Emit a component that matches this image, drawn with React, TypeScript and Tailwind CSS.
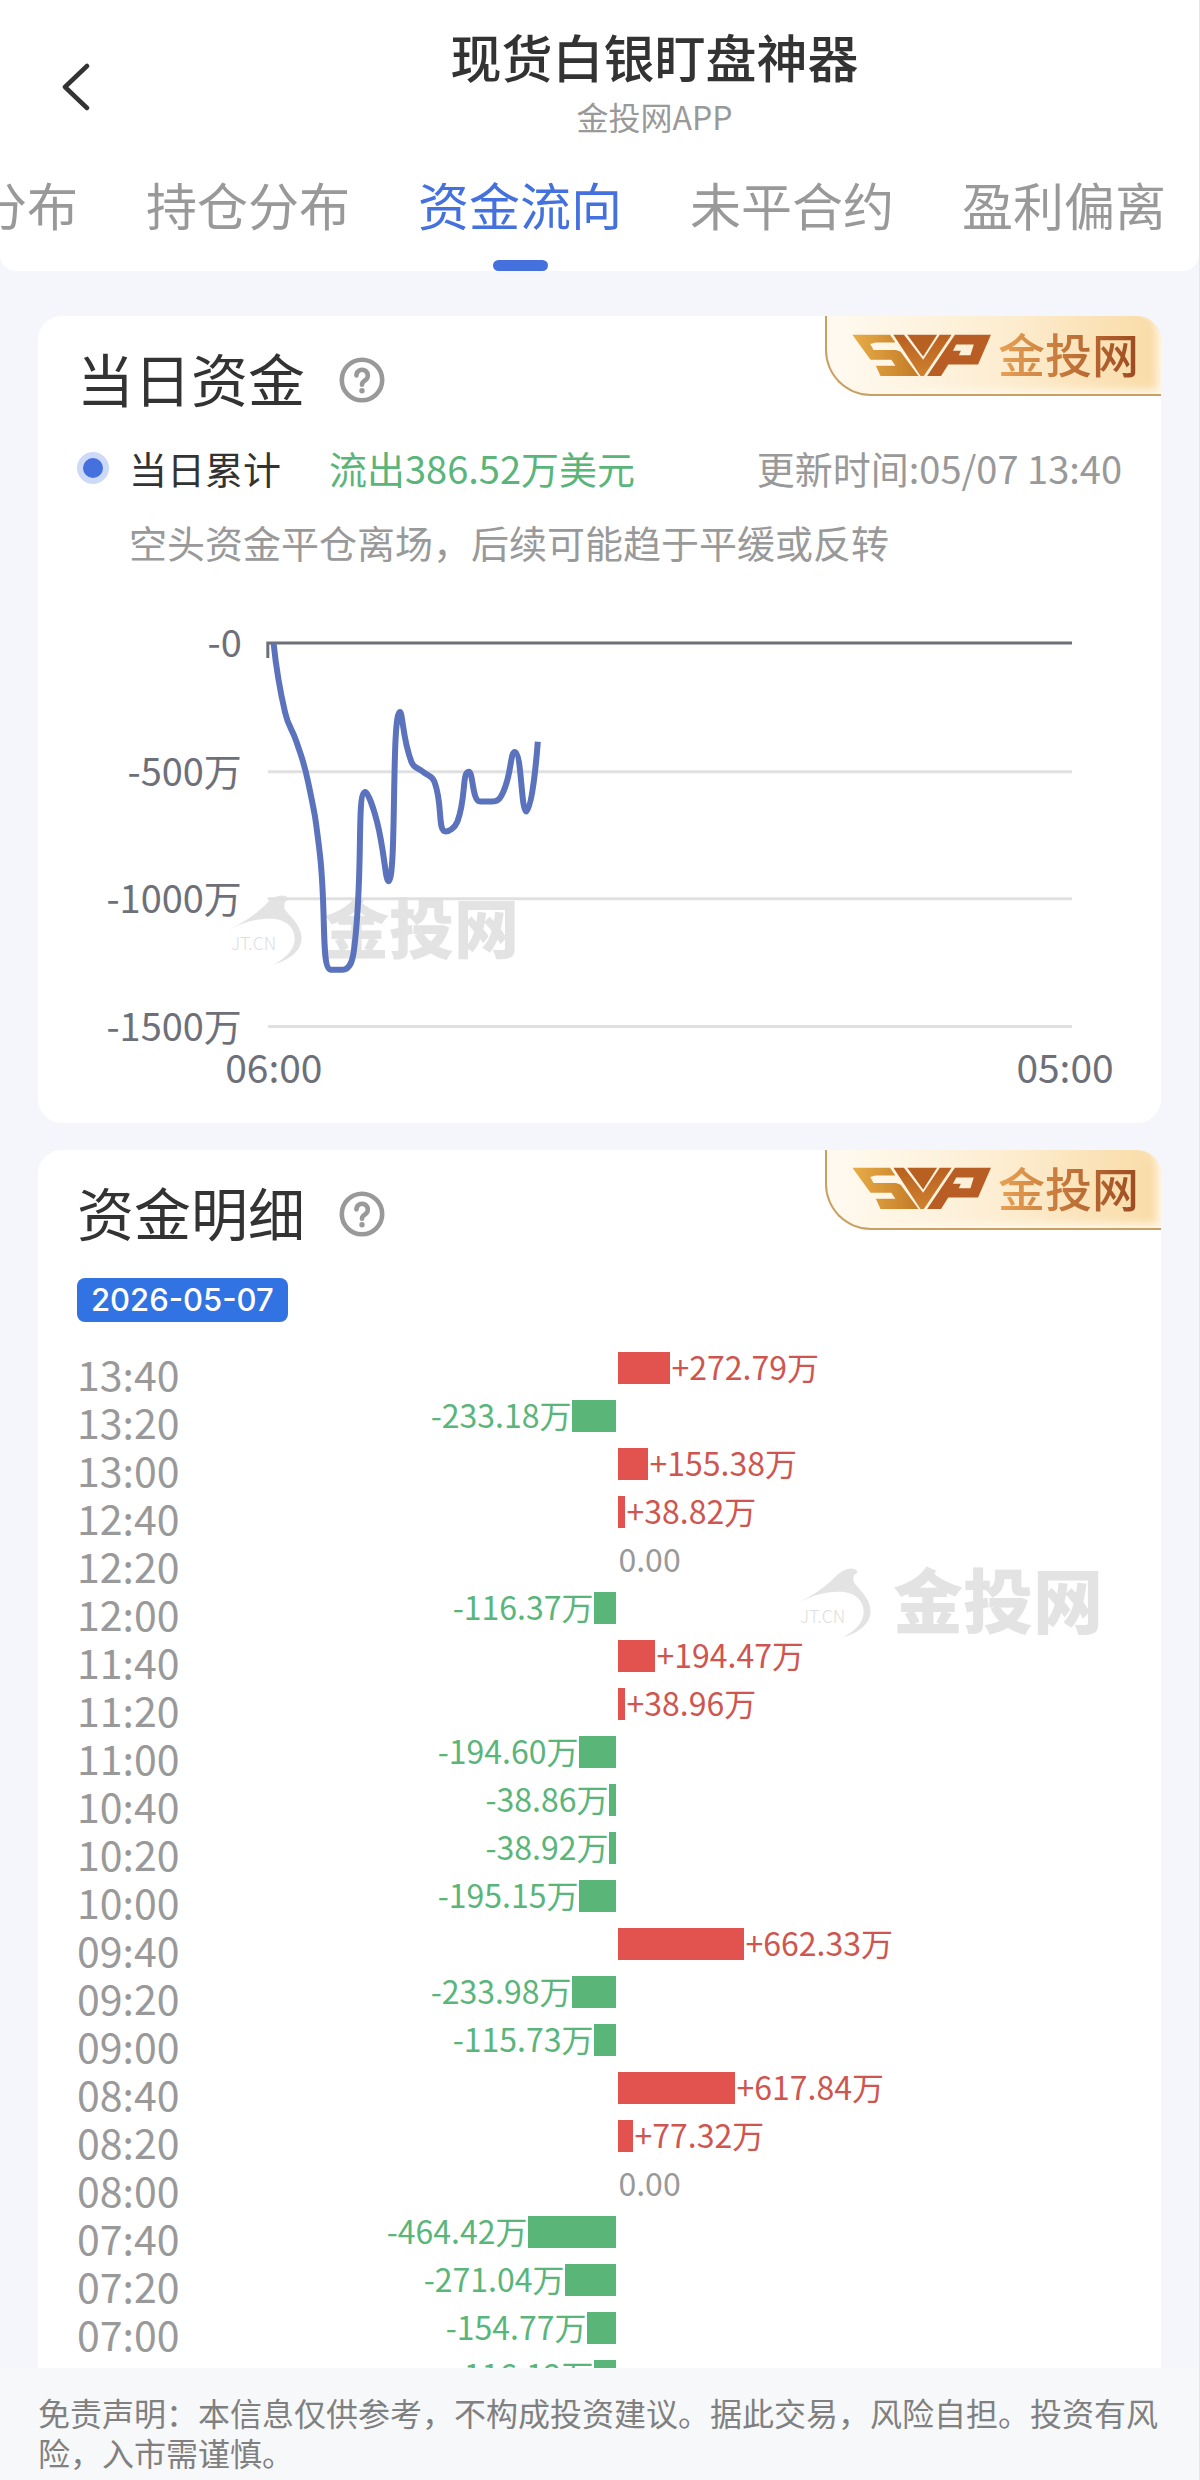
import React from 'react';

interface FlowRecord {
  time: string;
  value: number;
}

// Newest first, values in 万 USD
const records: FlowRecord[] = [
  { time: '13:40', value: 272.79 },
  { time: '13:20', value: -233.18 },
  { time: '13:00', value: 155.38 },
  { time: '12:40', value: 38.82 },
  { time: '12:20', value: 0 },
  { time: '12:00', value: -116.37 },
  { time: '11:40', value: 194.47 },
  { time: '11:20', value: 38.96 },
  { time: '11:00', value: -194.6 },
  { time: '10:40', value: -38.86 },
  { time: '10:20', value: -38.92 },
  { time: '10:00', value: -195.15 },
  { time: '09:40', value: 662.33 },
  { time: '09:20', value: -233.98 },
  { time: '09:00', value: -115.73 },
  { time: '08:40', value: 617.84 },
  { time: '08:20', value: 77.32 },
  { time: '08:00', value: 0 },
  { time: '07:40', value: -464.42 },
  { time: '07:20', value: -271.04 },
  { time: '07:00', value: -154.77 },
  { time: '06:40', value: -116.12 },
  { time: '06:20', value: -271.29 },
  { time: '06:00', value: 0 },
];

const PAGE_SIZE = 22;

const tabs = ['成本分布', '持仓分布', '资金流向', '未平合约', '盈利偏离'];
const activeTab = '资金流向';

const gridLines = [
  { label: '-0', y: 43 },
  { label: '-500万', y: 172 },
  { label: '-1000万', y: 299 },
  { label: '-1500万', y: 427 },
];

const AXIS_LEFT = 191;
const AXIS_RIGHT = 996;
const SLOTS = 70; // 06:00 - 05:00, one slot every 20 minutes

const getPoints = () => {
  let total = 0;
  const step = (AXIS_RIGHT - AXIS_LEFT) / SLOTS;
  return [...records].reverse().map((r, i) => {
    total += r.value;
    return { x: AXIS_LEFT + step * (i + 0.5), y: 43 - (total * 384) / 1500 };
  });
};

const clamp = (v: number, a: number, b: number) =>
  Math.max(Math.min(v, Math.max(a, b)), Math.min(a, b));

// Smooth bezier through all points, control points never overshoot their segment
const smoothPath = (pts: { x: number; y: number }[], smooth = 0.5) => {
  let d = `M${pts[0].x} ${pts[0].y}`;
  let c0 = pts[0];
  for (let i = 1; i < pts.length; i++) {
    const prev = pts[i - 1];
    const cur = pts[i];
    const next = pts[i + 1];
    let c1 = cur;
    let nextC0 = cur;
    if (next) {
      const lenPrev = Math.hypot(cur.x - prev.x, cur.y - prev.y);
      const lenNext = Math.hypot(next.x - cur.x, next.y - cur.y);
      const ratio = lenNext / (lenNext + lenPrev);
      nextC0 = {
        x: clamp(cur.x + (next.x - prev.x) * smooth * ratio, next.x, cur.x),
        y: clamp(cur.y + (next.y - prev.y) * smooth * ratio, next.y, cur.y),
      };
      c1 = {
        x: clamp(cur.x - ((nextC0.x - cur.x) * lenPrev) / lenNext, prev.x, cur.x),
        y: clamp(cur.y - ((nextC0.y - cur.y) * lenPrev) / lenNext, prev.y, cur.y),
      };
      nextC0 = {
        x: cur.x + ((cur.x - c1.x) * lenNext) / lenPrev,
        y: cur.y + ((cur.y - c1.y) * lenNext) / lenPrev,
      };
    }
    d += `C${c0.x} ${c0.y} ${c1.x} ${c1.y} ${cur.x} ${cur.y}`;
    c0 = nextC0;
  }
  return d;
};

const HelpIcon: React.FC = () => (
  <svg viewBox="0 0 46 46" className="size-[46px]" fill="none" stroke="#999" strokeLinecap="round" aria-hidden="true">
    <circle cx="23" cy="23" r="20.2" strokeWidth="4.6" />
    <path d="M17.4 18.4a5.7 5.7 0 1 1 8.8 4.9c-2.1 1.4-3.2 2.2-3.2 4.4" strokeWidth="4.6" />
    <circle cx="23" cy="33.8" r="2.7" fill="#999" stroke="none" />
  </svg>
);

const BrandBadge: React.FC = () => (
  <div className="absolute right-0 top-0 flex h-20 w-[336px] items-center gap-1.5 rounded-bl-[46px] rounded-tr-[24px] border-b-2 border-l-2 border-[#c9a063] bg-linear-to-r from-[#fffaf1] via-[#fdeed3] to-[#f9dba6] pl-6 shadow-[inset_-6px_-6px_8px_-2px_#fff8ea]">
    <svg viewBox="20 26 422 130" className="h-[43px] w-[141px] shrink-0" role="img" aria-label="SVP">
      <defs>
        <linearGradient id="svp-s" gradientUnits="userSpaceOnUse" x1="22" x2="222" y1="90" y2="90">
          <stop offset="0" stopColor="#e8ad48" />
          <stop offset="1" stopColor="#c27a26" />
        </linearGradient>
        <linearGradient id="svp-v" gradientUnits="userSpaceOnUse" x1="0" x2="0" y1="28" y2="152">
          <stop offset="0" stopColor="#b9601f" />
          <stop offset="1" stopColor="#cf812f" />
        </linearGradient>
      </defs>
      <path fill="url(#svp-s)" d="M22 28H136L152 52H92L76 56L86 74H154L168 80L222 153H107L93 122H152L140 104H77Z" />
      <path fill="url(#svp-v)" d="M146 28H178L236 104L286 28H322L238 153H228Z" />
      <path fill="#b85f22" d="M188 28H278L236 94Z" />
      <path fill="#b85e24" fillRule="evenodd" d="M332 28H441L402 118H312L290 153H248ZM336 58H389L379 90H344L350 77H326Z" />
    </svg>
    <span className="bg-linear-to-r from-[#e8a254] to-[#9c4a20] bg-clip-text pb-1 text-[47px] leading-[56px] font-medium text-transparent">
      金投网
    </span>
  </div>
);

const Watermark: React.FC<{ className: string }> = ({ className }) => (
  <div
    className={`pointer-events-none absolute flex items-end gap-5 leading-[72px] font-black text-[#e3e3e3] ${className}`}
    aria-hidden="true"
  >
    <svg viewBox="24 20 236 222" className="h-[70px] w-[78px]">
      <path
        fill="currentColor"
        d="M25 131C75 108 118 78 150 44C168 27 192 17 208 24C216 27 219 33 214 36C204 40 202 50 204 62C208 78 258 110 258 158C257 198 220 226 170 240C212 218 238 190 236 156C234 118 204 95 158 95C108 95 72 108 25 131Z"
      />
      <text x="34" y="194" fontSize="56" fontWeight="300" fill="#dedede">
        JT.CN
      </text>
    </svg>
    <span className="pb-1">金投网</span>
  </div>
);

const CardTitle: React.FC<{ title: string }> = ({ title }) => (
  <div className="flex h-14 items-center gap-[34px]">
    <h2 className="pb-1.5 text-[57px] leading-[56px] text-[#333]">{title}</h2>
    <button type="button" aria-label={`${title}说明`}>
      <HelpIcon />
    </button>
  </div>
);

const FlowChart: React.FC = () => (
  <svg viewBox="0 0 1046 500" className="relative w-full" role="img" aria-label="当日资金累计走势">
    {gridLines.map((line, i) => (
      <g key={line.label}>
        {i > 0 && <line x1={AXIS_LEFT} x2={AXIS_RIGHT} y1={line.y} y2={line.y} stroke="#e0e0e0" strokeWidth="3" />}
        <text x="165" y={line.y + 14} textAnchor="end" fontSize="38" fill="#6e7079">
          {line.label}
        </text>
      </g>
    ))}
    <path d={`M${AXIS_LEFT} 58V43H${AXIS_RIGHT}`} fill="none" stroke="#6e7079" strokeWidth="3" />
    <path d={smoothPath(getPoints())} fill="none" stroke="#5b72bd" strokeWidth="6" strokeLinejoin="bevel" />
    <text x="197" y="483" textAnchor="middle" fontSize="39" fill="#6e7079">
      06:00
    </text>
    <text x="989" y="483" textAnchor="middle" fontSize="39" fill="#6e7079">
      05:00
    </text>
  </svg>
);

const barWidth = (value: number) => ({ width: Math.round(Math.abs(value) * 0.19) });

const FlowRow: React.FC<{ record: FlowRecord }> = ({ record: { time, value } }) => (
  <li className="grid h-12 grid-cols-[540fr_506fr] items-center text-[32px] leading-[44px]">
    <div className="flex items-center">
      <time className="mr-auto pt-2.5 text-[41px] leading-[38px] text-[#999]">{time}</time>
      {value < 0 && (
        <>
          <span className="mr-px pb-1 text-[#5ab57a]">{value.toFixed(2)}万</span>
          <span className="h-8 bg-[#5ab578]" style={barWidth(value)} />
        </>
      )}
    </div>
    <div className="flex items-center pl-0.5">
      {value > 0 && (
        <>
          <span className="h-8 bg-[#e2524e]" style={barWidth(value)} />
          <span className="ml-px pb-1 text-[#cf5650]">+{value.toFixed(2)}万</span>
        </>
      )}
      {value === 0 && <span className="pb-1 text-[#999]">0.00</span>}
    </div>
  </li>
);

export default function App() {
  return (
    <div className="flex h-screen flex-col overflow-hidden border-r border-[#e4e6ee] bg-[#f5f6fb] font-['Noto_Sans_CJK_SC',sans-serif]">
      <header className="shrink-0 overflow-hidden rounded-b-2xl bg-white">
        <div className="grid grid-cols-[110px_1fr] items-center pt-7">
          <button type="button" aria-label="返回" className="flex justify-end pr-5 pt-2.5">
            <svg viewBox="0 0 28 50" className="h-[50px] w-7" fill="none" stroke="#333" strokeWidth="4.5" strokeLinecap="round" strokeLinejoin="round">
              <path d="M25 4L3 25L25 46" />
            </svg>
          </button>
          <div className="text-center">
            <h1 className="text-[51px] leading-[56px] font-medium text-[#333]">现货白银盯盘神器</h1>
            <p className="mt-3 text-[32px] leading-10 text-[#999]">金投网APP</p>
          </div>
        </div>
        <nav className="-ml-[126px] mt-10 flex gap-[68px] text-[51px] leading-[56px]">
          {tabs.map((tab) => (
            <a
              key={tab}
              href="#"
              aria-current={tab === activeTab ? 'page' : undefined}
              className={`flex shrink-0 flex-col items-center gap-7 whitespace-nowrap ${tab === activeTab ? 'text-[#4471dd]' : 'text-[#999]'}`}
            >
              {tab}
              {tab === activeTab && <span className="h-[11px] w-[55px] rounded-full bg-[#4471dd]" />}
            </a>
          ))}
        </nav>
      </header>

      <main className="flex flex-1 flex-col gap-[27px] overflow-y-auto px-[38px] pt-[45px] [scrollbar-width:none]">
        <section className="relative shrink-0 rounded-3xl bg-white px-[39px] pb-[23px] pt-9">
          <BrandBadge />
          <CardTitle title="当日资金" />
          <div className="mt-8 flex h-14 items-center whitespace-nowrap text-[38px] leading-[56px]">
            <span className="size-8 rounded-full border-[6px] border-[#cddaf7] bg-[#4471dd]" />
            <span className="ml-5 text-[#333]">当日累计</span>
            <strong className="ml-12 font-normal text-[#5ab57a]">流出386.52万美元</strong>
            <span className="ml-auto text-[#999]">更新时间:05/07 13:40</span>
          </div>
          <p className="mb-[30px] mt-[18px] pl-[52px] text-[38px] leading-[56px] text-[#999]">
            空头资金平仓离场，后续可能趋于平缓或反转
          </p>
          <Watermark className="bottom-[158px] left-[188px] text-[65px]" />
          <FlowChart />
        </section>

        <section className="relative shrink-0 rounded-3xl bg-white px-[39px] pb-9 pt-9">
          <BrandBadge />
          <CardTitle title="资金明细" />
          <time className="mt-9 block w-fit rounded-lg bg-[#3173e3] px-3.5 font-['Inter',sans-serif] text-[31px] leading-[44px] font-medium text-white">
            2026-05-07
          </time>
          <ol className="mt-[22px]">
            {records.slice(0, PAGE_SIZE).map((record) => (
              <FlowRow key={record.time} record={record} />
            ))}
          </ol>
          <Watermark className="right-[58px] top-[412px] text-[70px]" />
        </section>
      </main>

      <footer className="shrink-0 bg-[#f7f8fa] px-[38px] pb-2 pt-6 text-[32px] leading-10 text-[#808080]">
        免责声明：本信息仅供参考，不构成投资建议。据此交易，风险自担。投资有风险，入市需谨慎。
      </footer>
    </div>
  );
}
